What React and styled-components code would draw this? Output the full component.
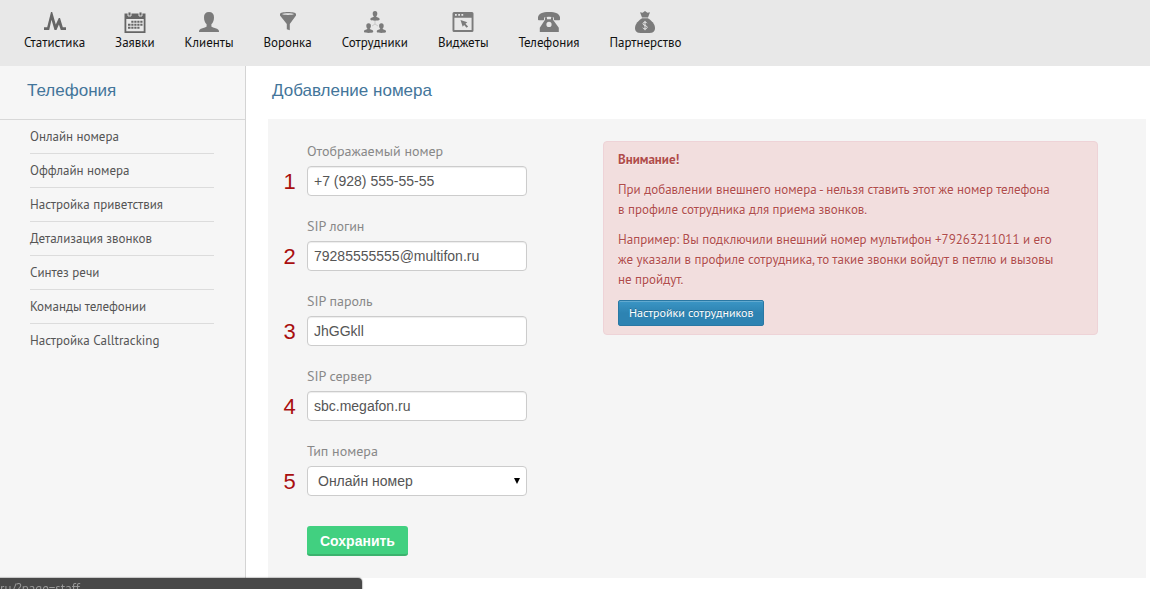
import React, { useState } from 'react';
import styled, { createGlobalStyle } from 'styled-components';

const uiFont = "'PT Sans', 'Noto Sans', 'Open Sans', sans-serif";
const arial = "Arial, 'Liberation Sans', sans-serif";

const GlobalStyle = createGlobalStyle`
  * {
    box-sizing: border-box;
  }

  body {
    margin: 0;
    background: #fff;
    color: #555;
    font-family: ${uiFont};
    font-size: 13px;
    line-height: 20px;
  }
`;

const Page = styled.div`
  display: flex;
  flex-direction: column;
  min-height: 100vh;
`;

const TopNav = styled.nav`
  display: flex;
  gap: 30px;
  padding: 11px 24px 13px;
  background: #e8e8e8;
`;

const NavLink = styled.a`
  display: flex;
  flex-direction: column;
  align-items: center;
  color: #111;
  text-decoration: none;
  white-space: nowrap;

  svg {
    display: block;
    width: 22px;
    height: 22px;
    color: #7b7b7b;
  }
`;

const Body = styled.div`
  display: flex;
  flex: 1;
`;

const Sidebar = styled.aside`
  flex: 0 0 246px;
  background: #f6f6f6;
  border-right: 1px solid #d4d4d4;
`;

const Heading = styled.h1`
  margin: 0;
  color: #43759a;
  font-family: ${arial};
  font-size: 17px;
  font-weight: normal;
  line-height: 20px;
`;

const SidebarHeader = styled.div`
  padding: 15px 27px 18px;
  border-bottom: 1px solid #d8d8d8;
`;

const SidebarMenu = styled.ul`
  list-style: none;
  margin: 0;
  padding: 0 31px 0 30px;
`;

const SidebarItem = styled.li`
  padding: 7px 0 6px;
  border-bottom: 1px solid #dcdcdc;

  &:last-child {
    border-bottom: none;
  }

  a {
    color: #555;
    text-decoration: none;
  }
`;

const Main = styled.main`
  flex: 1;
  padding: 15px 4px 11px 22px;
`;

const MainHeader = styled.header`
  padding: 0 4px 18px;
`;

const Panel = styled.section`
  display: flex;
  align-items: flex-start;
  gap: 76px;
  padding: 22px 48px 22px 14px;
  background: #f5f5f5;
`;

const Form = styled.form`
  display: grid;
  row-gap: 20px;
`;

const Field = styled.div`
  display: grid;
  grid-template-columns: 15px 220px;
  column-gap: 10px;
  row-gap: 5px;
`;

const Label = styled.label`
  grid-column: 2;
  color: #888;
  font-size: 14px;
  line-height: 20px;
`;

const Marker = styled.span`
  color: #a90f0f;
  font-family: ${arial};
  font-size: 22px;
  line-height: 32px;
  height: 30px;
  text-align: center;
`;

const Input = styled.input`
  width: 100%;
  height: 30px;
  padding: 4px 6px;
  border: 1px solid #ccc;
  border-radius: 4px;
  background: #fff;
  box-shadow: inset 0 1px 1px rgba(0, 0, 0, 0.075);
  color: #555;
  font-family: ${arial};
  font-size: 14px;
  line-height: 20px;
`;

const SelectWrapper = styled.div`
  position: relative;

  &::after {
    content: '';
    position: absolute;
    top: 12px;
    right: 7px;
    border: 3px solid transparent;
    border-top: 6px solid #000;
    border-bottom: none;
    pointer-events: none;
  }
`;

const Select = styled(Input).attrs({ as: 'select' })`
  appearance: none;
  padding: 4px 10px;
  box-shadow: none;
`;

const Actions = styled.div`
  padding: 10px 0 0 25px;
`;

const SaveButton = styled.button`
  display: block;
  height: 30px;
  padding: 2px 13px 0;
  border: none;
  border-bottom: 2px solid #3bb26d;
  border-radius: 3px;
  background: #41d080;
  color: #fff;
  font-family: ${arial};
  font-size: 14px;
  font-weight: bold;
  cursor: pointer;
`;

const Alert = styled.div`
  flex: 1;
  padding: 8px 40px 8px 14px;
  border: 1px solid #eed3d7;
  border-radius: 4px;
  background: #f2dede;
  color: #b04b4a;
  text-shadow: 0 1px 0 rgba(255, 255, 255, 0.5);

  p {
    margin: 0 0 10px;
  }
`;

const StaffLink = styled.a`
  display: inline-block;
  padding: 2px 10px;
  border: 1px solid #2a78a4;
  border-radius: 2px;
  background: linear-gradient(#3b95c5, #2d83b2 50%);
  box-shadow: inset 0 1px 0 rgba(255, 255, 255, 0.2);
  color: #fff;
  font-size: 12px;
  text-decoration: none;
  text-shadow: 0 -1px 0 rgba(0, 0, 0, 0.25);
  vertical-align: top;
`;

const StatusBar = styled.div`
  position: fixed;
  left: 0;
  bottom: 0;
  width: 362px;
  height: 11px;
  overflow: hidden;
  border-radius: 0 4px 0 0;
  background: #484848;
  box-shadow: 0 0 1px 1px rgba(0, 0, 0, 0.2);
  color: #999;
  font-size: 13px;
  line-height: 22px;
`;

const StatsIcon = () => (
  <svg viewBox="0 0 22 22" fill="#666">
    <path d="M0 16.300h3.200L7 1h1.200l3.600 12.500L14.800 7h1.200l2.800 9.300H22V19h-5.200l-1.900-5.600-2.400 5.600h-2L7.500 8.800 5.200 19H0z" />
  </svg>
);

const CalendarIcon = () => (
  <svg viewBox="0 0 22 22" fill="#666">
    <path fillRule="evenodd" d="M.5 2.500h21V22H.5zM2.300 8v12.200h17.400V8z" />
    <path d="M4 1h3v4H4zM15 1h3v4h-3z" stroke="#e8e8e8" strokeWidth=".9" />
    <path d="M7.300 9.800h2.200v2H7.300zm3 0h2.200v2h-2.200zm3 0h2.200v2h-2.200zm3 0h2.200v2h-2.200zM4 12.800h2.500v2H4zm3.300 0h2.200v2H7.300zm3 0h2.200v2h-2.200zm3 0h2.200v2h-2.200zm3 0h2.200v2h-2.200zM4 15.800h2.500v2H4zm3.300 0h2.200v2H7.300zm3 0h2.200v2h-2.200zm3 0h2.200v2h-2.200z" />
  </svg>
);

const ClientIcon = () => (
  <svg viewBox="0 0 22 22" fill="currentColor">
    <path d="M11 1C7.700 1 6 3 6 6.200c0 3 .9 5.600 2.600 7v2.200c-1 1.200-6 1.600-7.200 3.600-.4.700-.4 1.500-.4 2h20c0-.5 0-1.300-.4-2-1.200-2-6.200-2.400-7.200-3.600v-2.200c1.700-1.400 2.600-4 2.600-7C16 3 14.300 1 11 1z" />
  </svg>
);

const FunnelIcon = () => (
  <svg viewBox="0 0 22 22" fill="currentColor">
    <path fillRule="evenodd" d="M3 3c0-1.300 3.600-2 8-2s8 .7 8 2v1.500L12.800 13v6.200l-3-1V13L3 4.500zm2 .1c1 .7 3.200.9 6 .9s5-.2 6-.9c-1-.6-3.200-.8-6-.8s-5 .2-6 .8z" />
  </svg>
);

const personPath = 'M0-5.200c-1.700 0-2.300 1-2.300 2.400 0 1.300.5 2.500 1.200 3C-1.300 1-4.600.9-4.600 3v.6C-4 4.200-2 4.500 0 4.500s4-.3 4.600-.9V3C4.600.9 1.300 1 1.100.2c.7-.5 1.200-1.700 1.200-3 0-1.400-.6-2.400-2.300-2.400z';

const StaffIcon = () => (
  <svg viewBox="0 0 22 22" fill="currentColor">
    <path d="M11 10v3l-3 2m3-2l3 2" fill="none" stroke="#c9c9c9" strokeWidth="1" />
    <path d={personPath} transform="translate(11 5.200)" />
    <path d={personPath} transform="translate(4.600 17.500)" />
    <path d={personPath} transform="translate(17.400 17.500)" />
  </svg>
);

const WidgetIcon = () => (
  <svg viewBox="0 0 22 22" fill="currentColor">
    <path fillRule="evenodd" d="M2 1h18q1.500 0 1.500 1.500v17q0 1.500-1.500 1.500H2Q.5 21 .5 19.500v-17Q.5 1 2 1zm.4 5.800v12.300h17.200V6.800zM3 3v1.800h1.800V3zm3.200 0v1.800H8V3zm3.200 0v1.800h1.800V3z" />
    <path d="M8.500 9l6.800 2.300-1.800 1.400 2.600 2.800-1.500 1.300-2.500-2.800-1.400 1.700z" />
  </svg>
);

const PhoneIcon = () => (
  <svg viewBox="0 0 22 22" fill="currentColor">
    <path d="M0 8.400V6.200C.6 2.800 4.200 1 11 1s10.400 1.800 11 5.200v2.200q0 .8-.8.800h-4.500q-.8 0-.8-.8V6.500q-2-.8-4.900-.8t-4.900.8v1.900q0 .8-.8.800H.8Q0 9.200 0 8.400z" />
    <path fillRule="evenodd" d="M7 6.200h2v2h4v-2h2v2.500l5.800 8V21H1.800v-4.300L7 8.700zm4 4.600a2.600 2.600 0 100 5.200 2.600 2.600 0 000-5.200z" />
  </svg>
);

const MoneyIcon = () => (
  <svg viewBox="0 0 22 22" fill="currentColor">
    <path d="M6 1.200l2.600.6L11 0l2.400 1.800 2.600-.6-2 5.300H8z" />
    <path d="M8.200 7.300h5.600c3.500 2 7.200 5.700 7.200 9.700 0 3.500-2.200 4.900-5 4.900H6c-2.800 0-5-1.400-5-4.900 0-4 3.700-7.700 7.200-9.700z" />
    <path d="M13 12.200c-.4-.8-1.100-1.100-2-1.100-1.200 0-2 .6-2 1.600 0 2.300 4.200 1.300 4.200 3.600 0 1-.9 1.700-2.200 1.700-1.100 0-1.900-.5-2.200-1.300M11 9.900v9.300" fill="none" stroke="#e8e8e8" strokeWidth="1" />
  </svg>
);

const navItems = [
  { title: 'Статистика', icon: <StatsIcon /> },
  { title: 'Заявки', icon: <CalendarIcon /> },
  { title: 'Клиенты', icon: <ClientIcon /> },
  { title: 'Воронка', icon: <FunnelIcon /> },
  { title: 'Сотрудники', icon: <StaffIcon /> },
  { title: 'Виджеты', icon: <WidgetIcon /> },
  { title: 'Телефония', icon: <PhoneIcon /> },
  { title: 'Партнерство', icon: <MoneyIcon /> },
];

const menuItems = [
  'Онлайн номера',
  'Оффлайн номера',
  'Настройка приветствия',
  'Детализация звонков',
  'Синтез речи',
  'Команды телефонии',
  'Настройка Calltracking',
];

const fields = [
  { name: 'number', label: 'Отображаемый номер' },
  { name: 'login', label: 'SIP логин' },
  { name: 'password', label: 'SIP пароль' },
  { name: 'server', label: 'SIP сервер' },
];

const App = () => {
  const [values, setValues] = useState({
    number: '+7 (928) 555-55-55',
    login: '79285555555@multifon.ru',
    password: 'JhGGkll',
    server: 'sbc.megafon.ru',
    type: 'online',
  });

  const handleChange = (e) => setValues({ ...values, [e.target.name]: e.target.value });

  return (
    <Page>
      <GlobalStyle />
      <TopNav>
        {navItems.map((item) => (
          <NavLink key={item.title} href="#">
            {item.icon}
            {item.title}
          </NavLink>
        ))}
      </TopNav>

      <Body>
        <Sidebar>
          <SidebarHeader>
            <Heading as="h2">Телефония</Heading>
          </SidebarHeader>
          <SidebarMenu>
            {menuItems.map((item) => (
              <SidebarItem key={item}>
                <a href="#">{item}</a>
              </SidebarItem>
            ))}
          </SidebarMenu>
        </Sidebar>

        <Main>
          <MainHeader>
            <Heading>Добавление номера</Heading>
          </MainHeader>
          <Panel>
            <Form onSubmit={(e) => e.preventDefault()}>
              {fields.map((field, index) => (
                <Field key={field.name}>
                  <Label htmlFor={field.name}>{field.label}</Label>
                  <Marker>{index + 1}</Marker>
                  <Input
                    id={field.name}
                    name={field.name}
                    value={values[field.name]}
                    onChange={handleChange}
                  />
                </Field>
              ))}
              <Field>
                <Label htmlFor="type">Тип номера</Label>
                <Marker>5</Marker>
                <SelectWrapper>
                  <Select id="type" name="type" value={values.type} onChange={handleChange}>
                    <option value="online">Онлайн номер</option>
                  </Select>
                </SelectWrapper>
              </Field>
              <Actions>
                <SaveButton type="submit">Сохранить</SaveButton>
              </Actions>
            </Form>

            <Alert role="alert">
              <p>
                <strong>Внимание!</strong>
              </p>
              <p>
                При добавлении внешнего номера - нельзя ставить этот же номер телефона
                в профиле сотрудника для приема звонков.
              </p>
              <p>
                Например: Вы подключили внешний номер мультифон +79263211011 и его
                же указали в профиле сотрудника, то такие звонки войдут в петлю и вызовы
                не пройдут.
              </p>
              <StaffLink href="#">Настройки сотрудников</StaffLink>
            </Alert>
          </Panel>
        </Main>
      </Body>

      <StatusBar>ru/?page=staff</StatusBar>
    </Page>
  );
};

export default App;
